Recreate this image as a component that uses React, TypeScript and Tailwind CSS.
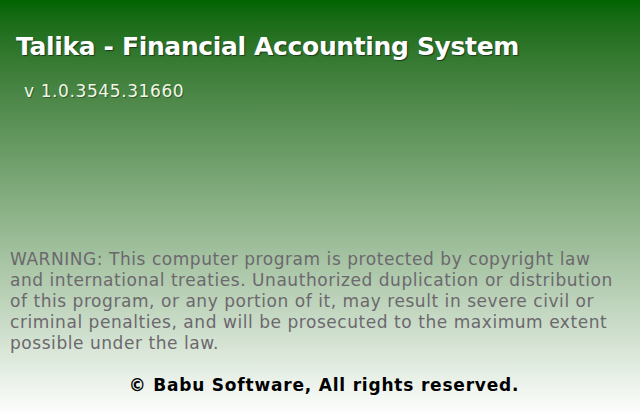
export default function App() {
  return (
    <div
      className="w-[640px] h-[417px] overflow-hidden flex flex-col bg-gradient-to-b from-[#006400] to-white"
      style={{ fontFamily: '"DejaVu Sans", Verdana, sans-serif' }}
    >
      {/* Title block */}
      <div className="pt-[32px] pl-[16px]">
        <h1 className="text-[25px] leading-[30px] font-bold tracking-[-0.35px] text-white [text-shadow:1px_1px_1px_#1a3a1a]">
          Talika - Financial Accounting System
        </h1>
        <div className="mt-[19px] ml-[8px] text-[17px] leading-[20px] tracking-[0.6px] text-[#f2f7e6] [text-shadow:1px_1px_0_#2f5f2f]">
          v 1.0.3545.31660
        </div>
      </div>

      <div className="flex-1" />

      {/* Legal notice */}
      <p className="px-[10px] text-[17px] leading-[21px] tracking-[0.55px] text-[#6c686e] whitespace-nowrap">
        WARNING: This computer program is protected by copyright law
        <br />
        and international treaties. Unauthorized duplication or distribution
        <br />
        of this program, or any portion of it, may result in severe civil or
        <br />
        criminal penalties, and will be prosecuted to the maximum extent
        <br />
        possible under the law.
      </p>

      <div className="mt-[21px] mb-[22px] pl-[8px] text-center text-[17px] leading-[20px] font-bold tracking-[0.8px] text-black">
        © Babu Software, All rights reserved.
      </div>
    </div>
  )
}
